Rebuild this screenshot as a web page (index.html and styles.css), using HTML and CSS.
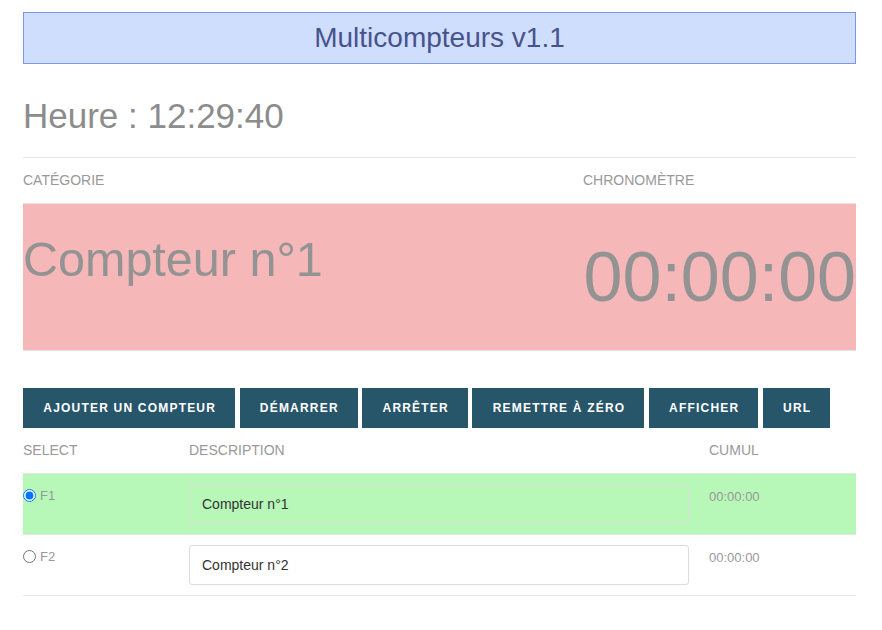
FILE: index.html
```html
<!DOCTYPE html>
<html lang="fr">
<head>
<meta charset="utf-8">
<title>Multicompteurs v1.1</title>
<link rel="stylesheet" href="styles.css">
</head>
<body>
<div class="page">
  <header class="title">Multicompteurs v1.1</header>
  <div class="clock">Heure : 12:29:40</div>
  <hr class="sep">

  <div class="cat-head">
    <div class="label">Catégorie</div>
    <div class="label">Chronomètre</div>
  </div>
  <div class="cat-row">
    <div class="cat-name">Compteur n°1</div>
    <div class="cat-chrono">00:00:00</div>
  </div>

  <div class="actions">
    <button class="btn">Ajouter un compteur</button>
    <button class="btn">Démarrer</button>
    <button class="btn">Arrêter</button>
    <button class="btn">Remettre à zéro</button>
    <button class="btn">Afficher</button>
    <button class="btn">URL</button>
  </div>

  <div class="list-head">
    <div class="label">Select</div>
    <div class="label">Description</div>
    <div class="label">Cumul</div>
  </div>
  <div class="list-row active">
    <label class="sel"><input type="radio" name="f" checked><span>F1</span></label>
    <div class="desc"><input class="field" type="text" value="Compteur n°1"></div>
    <div class="cumul">00:00:00</div>
  </div>
  <div class="list-row last">
    <label class="sel"><input type="radio" name="f"><span>F2</span></label>
    <div class="desc"><input class="field" type="text" value="Compteur n°2"></div>
    <div class="cumul">00:00:00</div>
  </div>
</div>
</body>
</html>
```
FILE: styles.css
```css
html, body {
  margin: 0;
  padding: 0;
  background: #ffffff;
}

body {
  font-family: "Liberation Sans", Arial, sans-serif;
  color: #8f8f8f;
}

.page {
  padding: 12px 26px 0 23px;
}

.title {
  height: 50px;
  line-height: 50px;
  border: 1px solid #7b96e6;
  background: #cfdefd;
  color: #48538c;
  font-size: 28px;
  text-align: center;
}

.clock {
  margin-top: 32px;
  font-size: 35px;
  color: #8c8c8c;
}

.sep {
  margin: 21px 0 0;
  border: 0;
  border-top: 1px solid #e5e5e5;
  height: 0;
}

.label {
  font-size: 14px;
  line-height: 16px;
  text-transform: uppercase;
  color: #999999;
}

.cat-head {
  display: grid;
  grid-template-columns: 560px 1fr;
  padding: 14px 0 15px;
}

.cat-row {
  display: grid;
  grid-template-columns: 560px 1fr;
  height: 146px;
  border-top: 1px solid #e5e5e5;
  border-bottom: 1px solid #e5e5e5;
  background: #f5b7b7;
}

.cat-name {
  padding-top: 27px;
  font-size: 48.5px;
  color: #939393;
}

.cat-chrono {
  align-self: center;
  text-align: right;
  font-size: 70px;
  color: #939393;
}

.actions {
  display: flex;
  gap: 4.45px;
  margin-top: 37px;
}

.btn {
  height: 40px;
  padding: 0 19px 0 20.3px;
  border: 0;
  border-radius: 0;
  background: #27566b;
  color: #ffffff;
  font-family: "Liberation Sans", Arial, sans-serif;
  font-size: 12px;
  font-weight: bold;
  letter-spacing: 0.1em;
  text-transform: uppercase;
}

.list-head {
  display: grid;
  grid-template-columns: 166px 520px 1fr;
  padding: 14px 0 15px;
}

.list-row {
  display: grid;
  grid-template-columns: 166px 520px 1fr;
  height: 60px;
  border-top: 1px solid #e5e5e5;
}

.list-row.active {
  background: #b7f7b7;
}

.list-row.last {
  border-bottom: 1px solid #e5e5e5;
}

.sel {
  display: flex;
  align-items: center;
  height: 13px;
  margin-top: 15px;
  font-size: 13px;
  line-height: 13px;
  color: #999999;
}

.sel input {
  width: 13px;
  height: 13px;
  margin: 0 4px 0 0;
}

.desc {
  padding-top: 10px;
}

.field {
  box-sizing: border-box;
  width: 500px;
  height: 40px;
  padding: 0 12px;
  border: 1px solid #dcdcdc;
  border-radius: 3px;
  background: transparent;
  font-family: "Liberation Sans", Arial, sans-serif;
  font-size: 14px;
  color: #333333;
  outline: none;
}

.list-row.last .field {
  background: #ffffff;
}

.cumul {
  padding-top: 15px;
  font-size: 13px;
  line-height: 15px;
  color: #999999;
}
```
